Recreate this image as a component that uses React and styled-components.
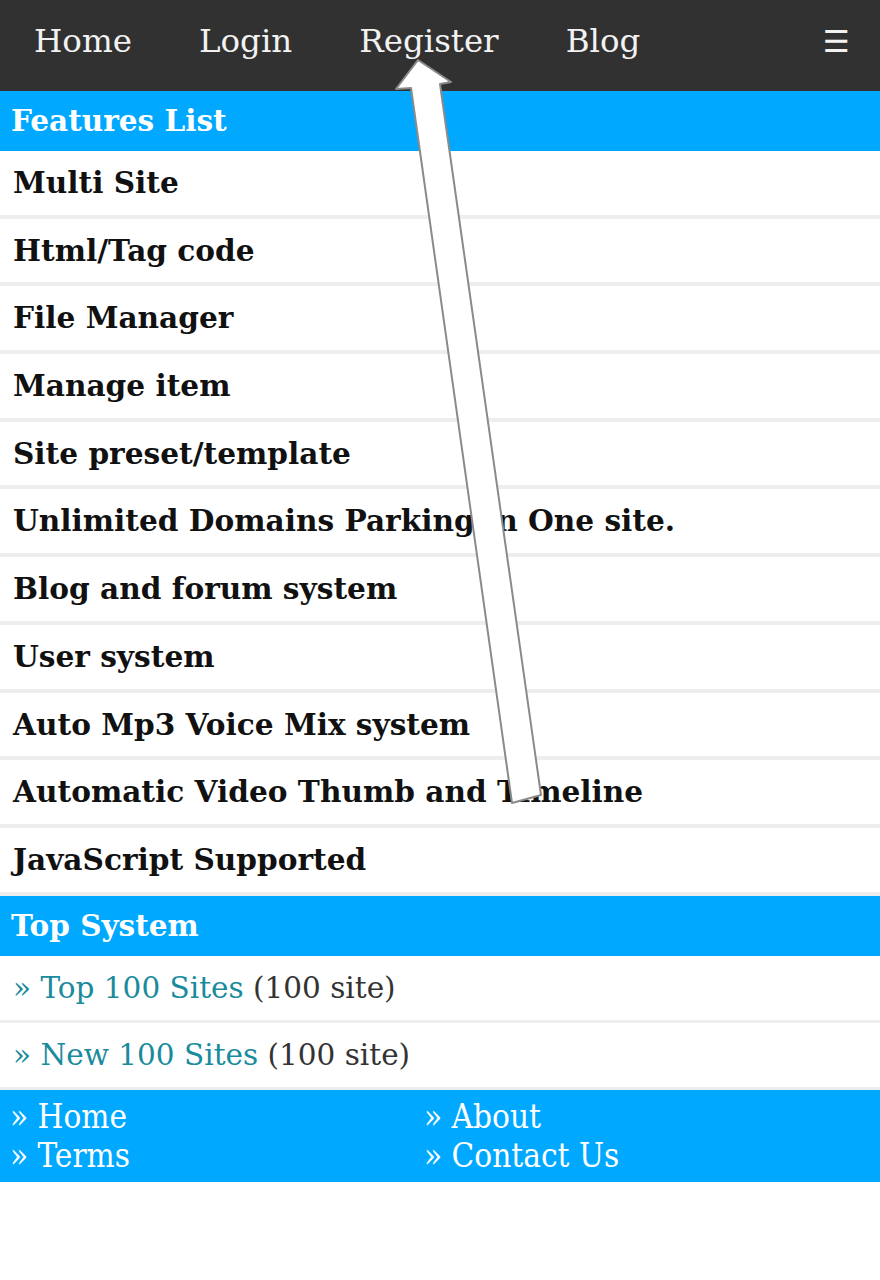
import React from 'react'
import styled, { createGlobalStyle } from 'styled-components'

const GlobalStyle = createGlobalStyle`
  html, body {
    margin: 0;
    padding: 0;
    background: #ffffff;
  }
  body {
    font-family: "DejaVu Serif", "Liberation Serif", serif;
  }
`

const features = [
  'Multi Site',
  'Html/Tag code',
  'File Manager',
  'Manage item',
  'Site preset/template',
  'Unlimited Domains Parking in One site.',
  'Blog and forum system',
  'User system',
  'Auto Mp3 Voice Mix system',
  'Automatic Video Thumb and Timeline',
  'JavaScript Supported',
]

const topLinks = [
  { label: 'Top 100 Sites', count: '(100 site)' },
  { label: 'New 100 Sites', count: '(100 site)' },
]

const footerLinks = ['Home', 'About', 'Terms', 'Contact Us']

function App() {
  return (
    <Page>
      <GlobalStyle />
      <NavBar>
        <NavList>
          <NavItem>Home</NavItem>
          <NavItem>Login</NavItem>
          <NavItem>Register</NavItem>
          <NavItem>Blog</NavItem>
        </NavList>
        <MenuIcon>☰</MenuIcon>
      </NavBar>

      <SectionTitle>Features List</SectionTitle>
      {features.map((f) => (
        <FeatureRow key={f}>{f}</FeatureRow>
      ))}

      <SectionTitle>Top System</SectionTitle>
      {topLinks.map((l) => (
        <LinkRow key={l.label}>
          <SiteLink>» {l.label}</SiteLink> <Count>{l.count}</Count>
        </LinkRow>
      ))}

      <Footer>
        {footerLinks.map((l) => (
          <FooterLink key={l}>» {l}</FooterLink>
        ))}
      </Footer>

      <Pointer viewBox="0 0 880 1280" aria-hidden="true">
        <polygon
          points="418,60 451,82 440,84 541,795 512,803 411,88 396,89"
          fill="#ffffff"
          stroke="#8a8a8a"
          strokeWidth="2"
          strokeLinejoin="round"
        />
      </Pointer>
    </Page>
  )
}

const Page = styled.div`
  position: relative;
  width: 880px;
  min-height: 1280px;
  background: #ffffff;
`

const NavBar = styled.nav`
  display: flex;
  align-items: flex-start;
  justify-content: space-between;
  height: 91px;
  background: #313131;
`

const NavList = styled.div`
  display: flex;
`

const NavItem = styled.a`
  padding: 0 33px 0 34px;
  color: #f2f2f2;
  font-size: 32.5px;
  line-height: 83px;
  text-decoration: none;
`

const MenuIcon = styled.span`
  margin-right: 30px;
  color: #f2f2f2;
  font-family: "DejaVu Sans", sans-serif;
  font-size: 30px;
  line-height: 84px;
`

const SectionTitle = styled.div`
  height: 60px;
  padding-left: 11px;
  background: #00a9ff;
  color: #ffffff;
  font-size: 29.5px;
  font-weight: bold;
  line-height: 60px;
`

const FeatureRow = styled.div`
  height: 63.7px;
  padding-left: 13px;
  border-bottom: 4px solid #eeeeee;
  color: #111111;
  font-size: 29.6px;
  font-weight: bold;
  line-height: 63.7px;
  white-space: nowrap;
`

const LinkRow = styled.div`
  height: 64px;
  padding-left: 13px;
  border-bottom: 3px solid #eeeeee;
  font-size: 29.5px;
  line-height: 64px;
  white-space: nowrap;
`

const SiteLink = styled.a`
  color: #1a8b9d;
  text-decoration: none;
`

const Count = styled.span`
  color: #333333;
`

const Footer = styled.div`
  display: grid;
  grid-template-columns: 414px 1fr;
  padding: 7px 10px;
  background: #00a9ff;
`

const FooterLink = styled.a`
  color: #ffffff;
  font-family: "DejaVu Serif Condensed", "DejaVu Serif", serif;
  font-stretch: condensed;
  font-size: 33px;
  line-height: 39px;
  text-decoration: none;
`

const Pointer = styled.svg`
  position: absolute;
  top: 0;
  left: 0;
  width: 880px;
  height: 1280px;
  pointer-events: none;
`

export default App
